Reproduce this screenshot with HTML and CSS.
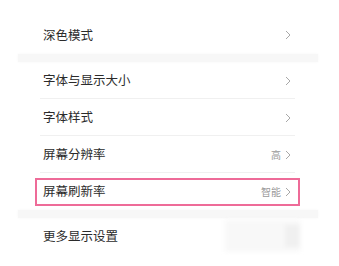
FILE: index.html
```html
<!DOCTYPE html>
<html lang="zh-CN">
  <head>
    <meta charset="UTF-8" />
    <meta name="viewport" content="width=device-width, initial-scale=1.0" />
    <title>显示设置</title>
    <link rel="stylesheet" href="styles.css">
  </head>
  <body>
    <div class="settings">
      <div class="group">
        <div class="row">
          <span class="label">深色模式</span>
          <span class="right"><svg class="chevron" viewBox="0 0 6 10"><path d="M1 1 L5 5 L1 9" /></svg></span>
        </div>
      </div>

      <div class="band"></div>

      <div class="group">
        <div class="row divided">
          <span class="label">字体与显示大小</span>
          <span class="right"><svg class="chevron" viewBox="0 0 6 10"><path d="M1 1 L5 5 L1 9" /></svg></span>
        </div>
        <div class="row divided">
          <span class="label">字体样式</span>
          <span class="right"><svg class="chevron" viewBox="0 0 6 10"><path d="M1 1 L5 5 L1 9" /></svg></span>
        </div>
        <div class="row divided">
          <span class="label">屏幕分辨率</span>
          <span class="right"><span class="value">高</span><svg class="chevron" viewBox="0 0 6 10"><path d="M1 1 L5 5 L1 9" /></svg></span>
        </div>
        <div class="row row-marked">
          <div class="highlight">
            <span class="label">屏幕刷新率</span>
            <span class="right"><span class="value">智能</span><svg class="chevron" viewBox="0 0 6 10"><path d="M1 1 L5 5 L1 9" /></svg></span>
          </div>
        </div>
      </div>

      <div class="band"></div>

      <div class="group">
        <div class="row">
          <span class="label">更多显示设置</span>
          <div class="smudge"><div class="smudge-dark"></div></div>
        </div>
      </div>
    </div>
  </body>
</html>
```

FILE: styles.css
```css
body {
  margin: 0;
  padding: 0;
  background: #fff;
  font-family: "Noto Sans CJK SC", "Noto Sans", sans-serif;
  color: #2b2b2b;
}

.settings {
  width: 300px;
  margin-left: 18px;
  padding-top: 16px;
}

.group {
  display: flex;
  flex-direction: column;
}

.band {
  height: 8px;
  background: #f7f7f7;
  box-shadow: 0 0 3px #f7f7f7;
}

.row {
  position: relative;
  height: 37px;
  display: flex;
  align-items: center;
  justify-content: space-between;
  padding: 0 27px 0 25px;
  box-sizing: border-box;
}

.group:first-child .row {
  height: 38px;
}

.divided::after {
  content: "";
  position: absolute;
  left: 22px;
  right: 23px;
  bottom: 0;
  height: 1px;
  background: #f0f0f0;
}

.label {
  font-size: 12.5px;
  line-height: 1;
  color: #2b2b2b;
}

.right {
  display: flex;
  align-items: center;
  gap: 4px;
}

.value {
  font-size: 10px;
  line-height: 1;
  color: #9a9a9a;
}

.chevron {
  width: 6px;
  height: 10px;
  fill: none;
  stroke: #a8a8a8;
  stroke-width: 1;
}

.row-marked {
  padding: 0;
}

.highlight {
  flex: 1;
  height: 28px;
  margin: 0 18px 0 17px;
  border: 2px solid #ee6b98;
  box-sizing: border-box;
  display: flex;
  align-items: center;
  justify-content: space-between;
  padding: 0 7px 0 6px;
}

/* faint grey smear in the last row */
.smudge {
  position: absolute;
  left: 207px;
  top: 2px;
  width: 75px;
  height: 32px;
  background: #f8f8f8;
  filter: blur(2px);
}

.smudge-dark {
  position: absolute;
  right: 0;
  top: 5px;
  width: 15px;
  height: 22px;
  background: #f0f0f0;
}
```
